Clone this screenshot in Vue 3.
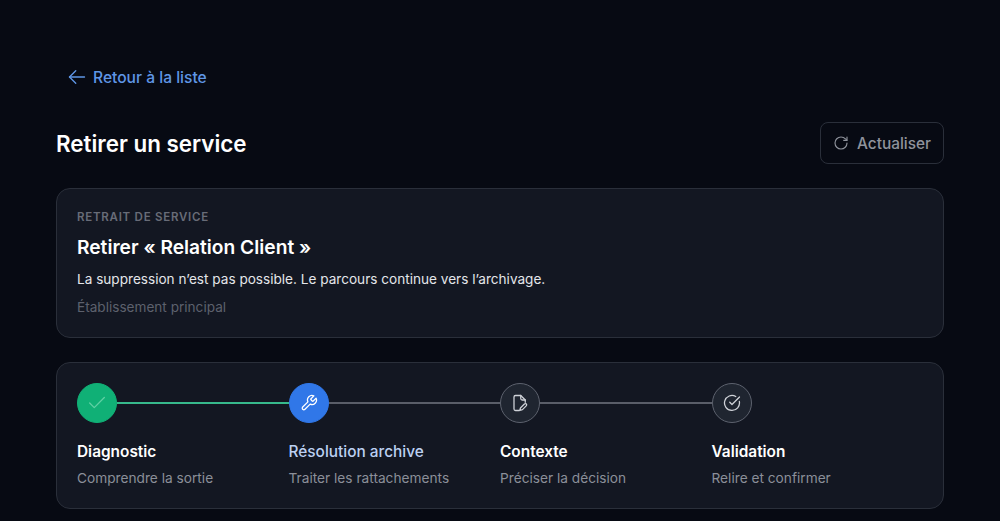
<script setup>
const steps = [
  { key: 'check', title: 'Diagnostic', sub: 'Comprendre la sortie', state: 'done' },
  { key: 'wrench', title: 'Résolution archive', sub: 'Traiter les rattachements', state: 'active' },
  { key: 'file', title: 'Contexte', sub: 'Préciser la décision', state: 'todo' },
  { key: 'circle', title: 'Validation', sub: 'Relire et confirmer', state: 'todo' },
]
</script>

<template>
  <main class="page">
    <a class="back" href="#">
      <svg class="ic-back" viewBox="0 0 24 24"><path d="M10.5 19.5 3 12l7.5-7.5" /><path d="M3 12h18" /></svg>
      Retour à la liste
    </a>
    <header class="head">
      <h1>Retirer un service</h1>
      <button class="refresh" type="button">
        <svg class="ic-refresh" viewBox="0 0 24 24"><path d="M21 12a9 9 0 1 1-9-9c2.52 0 4.93 1 6.74 2.74L21 8" /><path d="M21 3v5h-5" /></svg>
        Actualiser
      </button>
    </header>
    <section class="card intro">
      <div class="eyebrow">RETRAIT DE SERVICE</div>
      <h2>Retirer « Relation Client »</h2>
      <p class="desc">La suppression n’est pas possible. Le parcours continue vers l’archivage.</p>
      <p class="scope">Établissement principal</p>
    </section>
    <section class="card stepper">
      <div v-for="(s, i) in steps" :key="s.key" class="step" :class="s.state">
        <div class="track">
          <span class="dot">
            <svg v-if="s.key === 'check'" class="ic-check" viewBox="0 0 24 24"><path d="M20 6 9 17l-5-5" /></svg>
            <svg v-else-if="s.key === 'wrench'" viewBox="0 0 24 24"><path d="M14.7 6.3a1 1 0 0 0 0 1.4l1.6 1.6a1 1 0 0 0 1.4 0l3.77-3.77a6 6 0 0 1-7.94 7.94l-6.91 6.91a2.12 2.12 0 0 1-3-3l6.91-6.91a6 6 0 0 1 7.94-7.94l-3.76 3.76z" /></svg>
            <svg v-else-if="s.key === 'file'" viewBox="0 0 24 24"><path d="M11 22H6a2 2 0 0 1-2-2V4a2 2 0 0 1 2-2h7l6 6v3" /><path d="M13 2v4a2 2 0 0 0 2 2h4" /><path d="M20.6 13.4a1.9 1.9 0 0 0-2.7 0l-5 5a2 2 0 0 0-.5.9l-.7 2.7 2.7-.7a2 2 0 0 0 .9-.5l5-5a1.9 1.9 0 0 0 .3-2.4z" /></svg>
            <svg v-else viewBox="0 0 24 24"><path d="M21.8 10A10 10 0 1 1 17 3.3" /><path d="m9 11 3 3L22 4" /></svg>
          </span>
          <span v-if="i < steps.length - 1" class="line"></span>
        </div>
        <div class="title">{{ s.title }}</div>
        <div class="sub">{{ s.sub }}</div>
      </div>
    </section>
  </main>
</template>

<style>
html, body { margin: 0; background: #070a13; }
</style>

<style scoped>
.page {
  box-sizing: border-box;
  height: 521px;
  overflow: hidden;
  padding: 66px 56px 0;
  background: #070a13;
  font-family: Inter, "Liberation Sans", sans-serif;
  color: #fff;
}
svg { fill: none; stroke: currentColor; stroke-width: 2; stroke-linecap: round; stroke-linejoin: round; display: block; }
.back {
  display: flex; align-items: center; gap: 6px;
  margin-left: 11px; height: 22px;
  color: #5f96e6; font-size: 15.6px; font-weight: 500; line-height: 23px; text-decoration: none;
}
.ic-back { width: 20px; height: 20px; stroke-width: 1.6; }
.head { display: flex; justify-content: space-between; align-items: center; margin-top: 34px; height: 42px; }
h1 { margin: 1px 0 0; font-size: 22.4px; line-height: 28px; font-weight: 600; }
.refresh {
  box-sizing: border-box; width: 124px; height: 42px; padding: 0 12px;
  display: flex; align-items: center; gap: 7px;
  background: transparent; border: 1px solid #2a2f3a; border-radius: 8px;
  color: #8f939c; font: 500 15.4px Inter, sans-serif;
}
.ic-refresh { width: 16px; height: 16px; stroke-width: 1.7; margin-right: 1px; }
.card {
  box-sizing: border-box; background: #131722;
  border: 1px solid #2a2f3a; border-radius: 14px;
}
.intro { margin-top: 24px; height: 150px; padding: 20px; }
.eyebrow { font-size: 11.5px; line-height: 16px; font-weight: 600; letter-spacing: 0.75px; color: #686c78; }
h2 { margin: 7px 0 0; font-size: 19.2px; line-height: 30px; font-weight: 600; }
.desc { margin: 7px 0 0; font-size: 13.6px; line-height: 20px; color: #e4e6ea; }
.scope { margin: 8px 0 0; font-size: 13.6px; line-height: 20px; color: #5d616d; }
.stepper { margin-top: 24px; height: 147px; padding: 20px; display: grid; grid-template-columns: repeat(4, 1fr); }
.track { display: flex; align-items: center; height: 40px; }
.dot {
  box-sizing: border-box; flex: none; width: 40px; height: 40px; border-radius: 50%;
  display: flex; align-items: center; justify-content: center;
  background: #1f2530; border: 1px solid #5d626e; color: #cfd2d8;
}
.dot svg { width: 18px; height: 18px; stroke-width: 1.7; }
.dot .ic-check { width: 22px; height: 22px; stroke-width: 1.4; }
.line { flex: 1; height: 2px; background: #5a5e69; }
.done .dot { background: #10b076; border-color: #10b076; color: #5fd0a4; }
.done .line { background: #37b98c; }
.active .dot { background: #3077e8; border-color: #3077e8; color: #fff; }
.title { margin-top: 18px; font-size: 15.4px; line-height: 22px; font-weight: 600; color: #fff; }
.active .title { color: #bcd0f2; font-weight: 500; }
.sub { margin-top: 5px; font-size: 13.7px; line-height: 20px; color: #8b8f99; }
</style>
